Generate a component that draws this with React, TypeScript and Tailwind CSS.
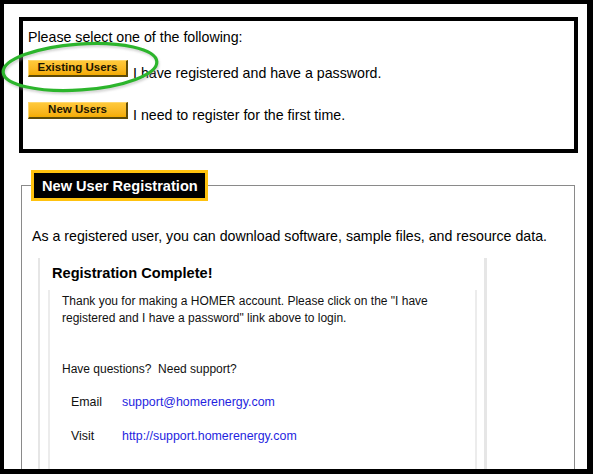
import React from "react";

function GoldButton({ label }: { label: string }) {
  return (
    <button
      type="button"
      className="w-[100px] h-[17px] shrink-0 flex items-center justify-center bg-gradient-to-b from-[#ffc93a] to-[#f4ac00] border-t border-l border-t-[#ffd76b] border-l-[#ffd76b] border-r-2 border-b-2 border-r-[#5e4b08] border-b-[#5e4b08] text-[11.5px] leading-none font-bold text-[#1c1500]"
    >
      {label}
    </button>
  );
}

export default function App() {
  return (
    <div className="relative w-[593px] h-[474px] bg-black pt-[4px] pl-[4px] pr-[6px] pb-[5px] overflow-hidden font-['Liberation_Sans',Arial,sans-serif]">
      <div className="bg-white h-full overflow-hidden pt-[13px] pl-[15px]">
        {/* choice box */}
        <div className="w-[559px] border-4 border-black pl-[5px] pt-[8px] pb-[26px] text-[14.2px] leading-4 text-black">
          <p>Please select one of the following:</p>
          <div className="mt-[15px] flex items-start gap-[5px]">
            <GoldButton label="Existing Users" />
            <span className="mt-[5px]">I have registered and have a password.</span>
          </div>
          <div className="mt-[21px] flex items-start gap-[5px]">
            <GoldButton label="New Users" />
            <span className="mt-[5px]">I need to register for the first time.</span>
          </div>
        </div>

        {/* registration fieldset */}
        <fieldset className="mt-[17px] ml-[2px] w-[554px] border border-[#8a8a8a]">
          <legend className="ml-[9px] bg-black border-[3px] border-[#ffc20e] pl-[8px] pr-[7px] pt-[5px] pb-[4px] text-white font-bold text-[14.6px] leading-4">
            New User Registration
          </legend>
          <div className="pt-[27px] pl-[10px] pb-[40px]">
            <p className="text-[14.2px] leading-4 text-black">
              As a registered user, you can download software, sample files, and resource data.
            </p>
            <div className="mt-[14px] ml-[6px] w-[449px] border-l-2 border-r-[3px] border-[#e6e6e6] pl-[8px] pt-[7px] pb-[30px]">
              <h3 className="pl-[4px] font-bold text-[14.6px] leading-4 text-black">Registration Complete!</h3>
              <div className="mt-[9px] w-[429px] border-l-2 border-r-2 border-[#ececec] pl-[12px] pt-[3px] pb-[30px] text-[12px] leading-[17px] text-[#111]">
                <p>
                  Thank you for making a HOMER account. Please click on the "I have
                  <br />
                  registered and I have a password" link above to login.
                </p>
                <p className="mt-[34px]">Have questions?&nbsp; Need support?</p>
                <div className="mt-[16px] pl-[9px] grid grid-cols-[51px_1fr] gap-y-[17px]">
                  <span className="text-[12.4px]">Email</span>
                  <a className="text-[12.4px] text-[#1f1fe0]">support@homerenergy.com</a>
                  <span className="text-[12.4px]">Visit</span>
                  <a className="text-[12.4px] text-[#1f1fe0]">http://support.homerenergy.com</a>
                </div>
              </div>
            </div>
          </div>
        </fieldset>
      </div>

      {/* green highlight ellipse drawn over the page */}
      <svg className="absolute left-0 top-0 pointer-events-none" width="593" height="474" viewBox="0 0 593 474">
        <defs>
          <filter id="sh" x="-10%" y="-30%" width="120%" height="160%">
            <feGaussianBlur stdDeviation="1.2" />
          </filter>
        </defs>
        <ellipse cx="81" cy="69" rx="77" ry="23" fill="none" stroke="#9a9a9a" strokeWidth="3" opacity="0.45" filter="url(#sh)" transform="rotate(-4 81 69)" />
        <ellipse cx="80" cy="67" rx="77" ry="23" fill="none" stroke="#2cb52c" strokeWidth="3.2" transform="rotate(-4 80 67)" />
      </svg>
    </div>
  );
}
